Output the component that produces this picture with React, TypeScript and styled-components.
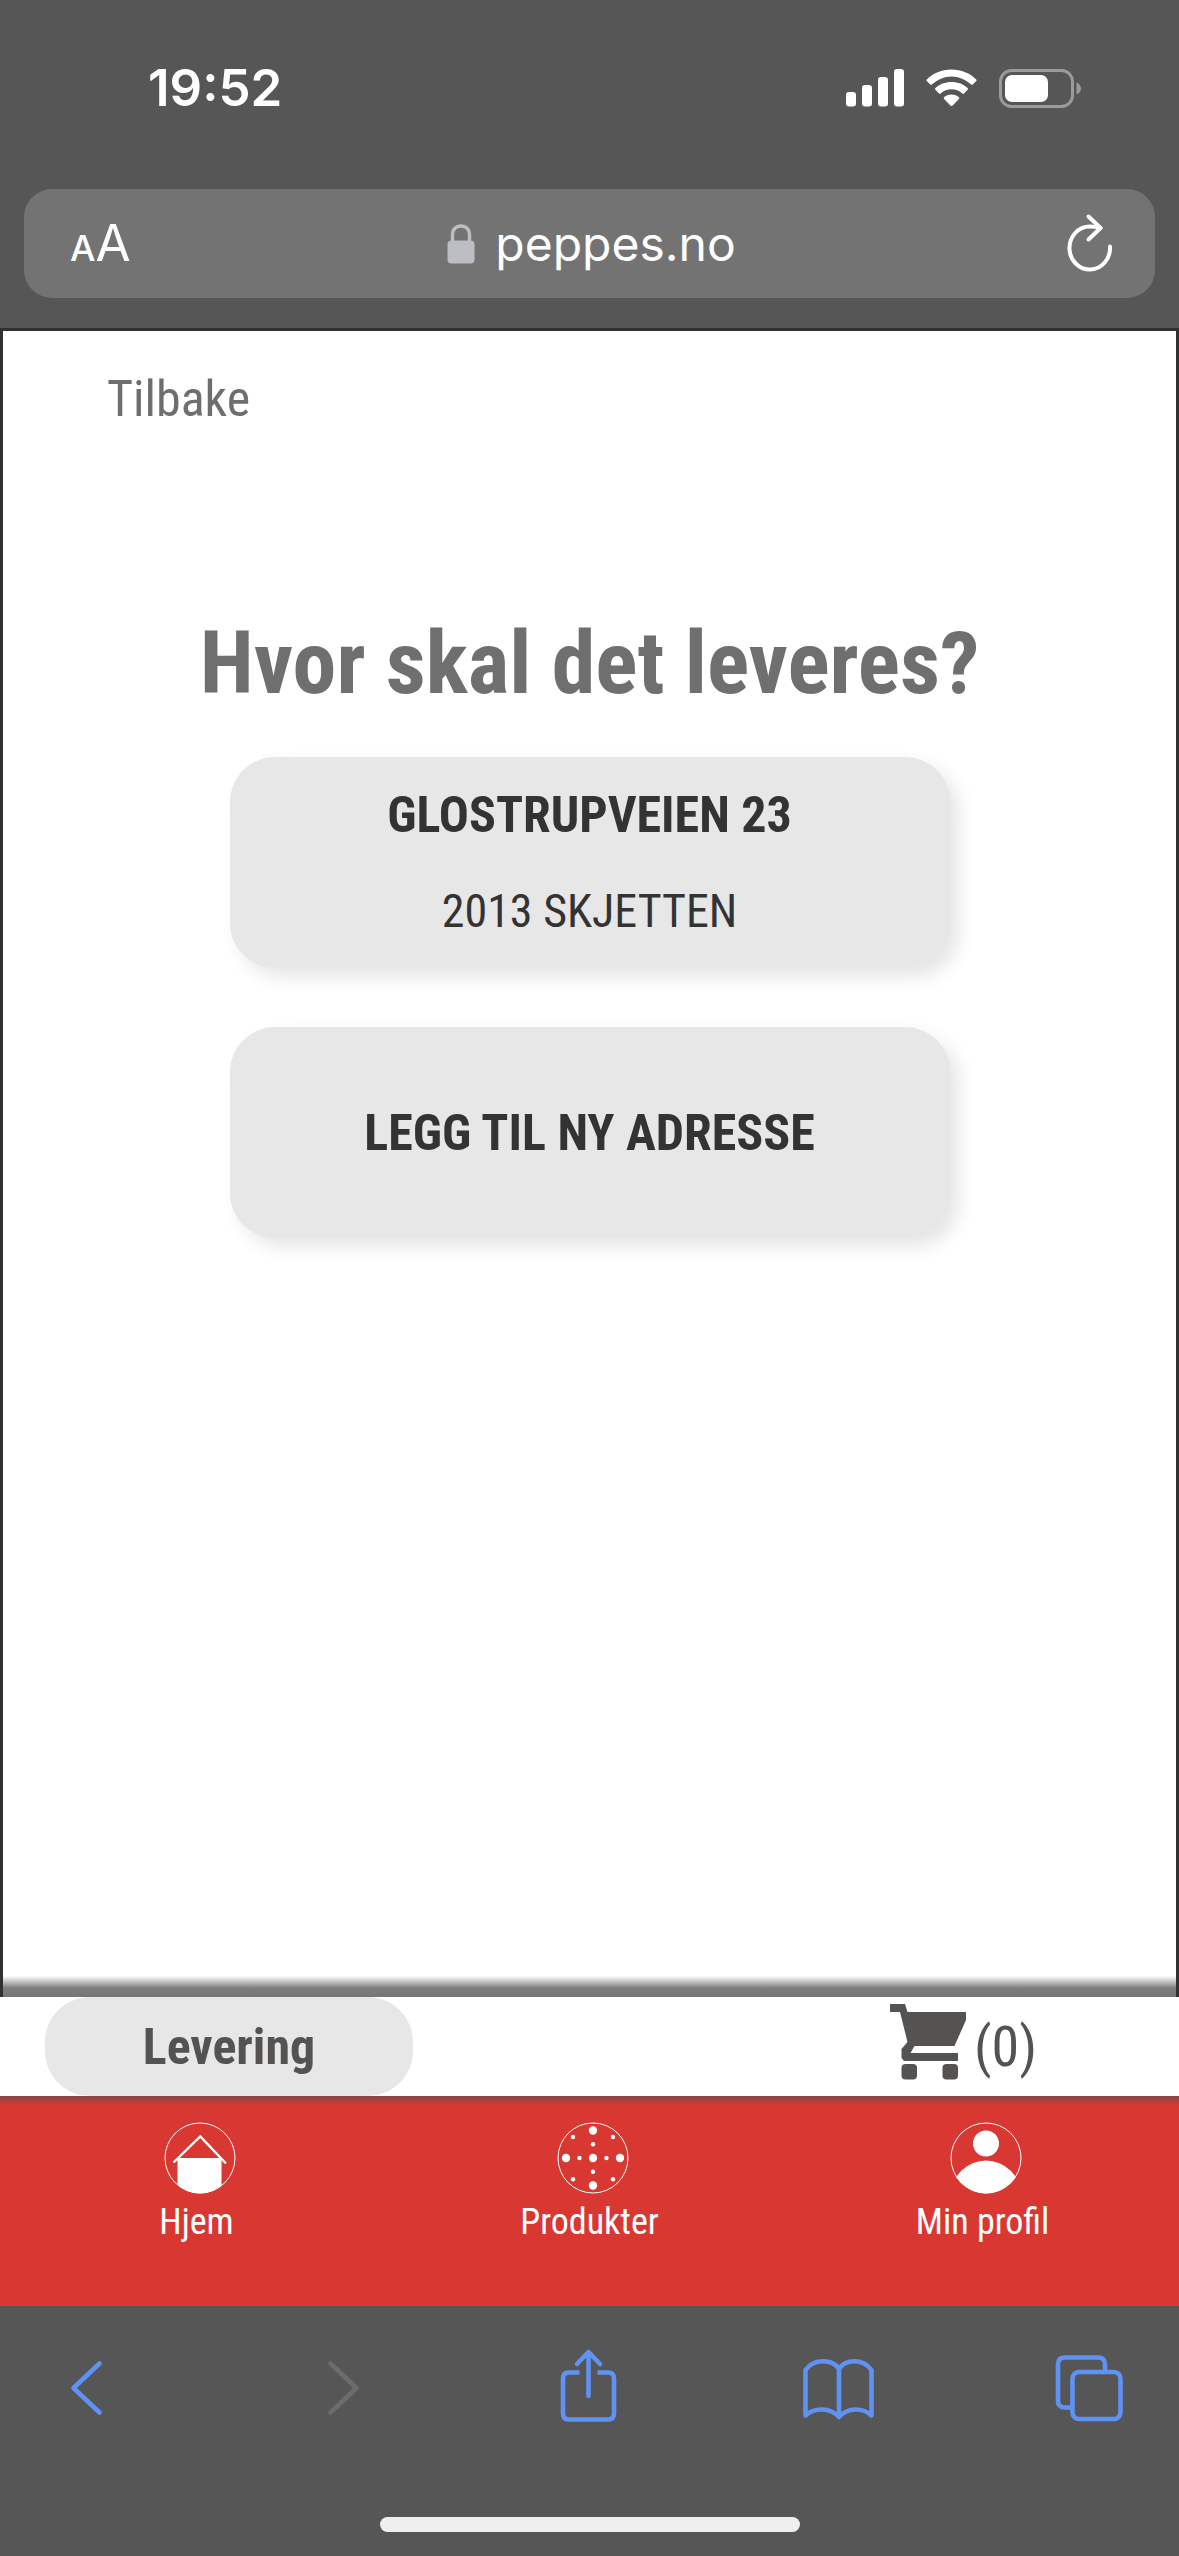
import React from "react";
import styled, { createGlobalStyle } from "styled-components";

const SYSTEM = 'Inter, "Liberation Sans", sans-serif';
const BRAND = '"Roboto Condensed", "Liberation Sans", sans-serif';
const CHROME = "#565656";
const BLUE = "#5e93f3";

const GlobalStyle = createGlobalStyle`
  *, *::before, *::after { box-sizing: border-box; }
  body { margin: 0; background: ${CHROME}; font-family: ${BRAND}; }
  button { border: 0; padding: 0; background: none; font: inherit; color: inherit; cursor: pointer; }
  a { color: inherit; text-decoration: none; }
  svg { display: block; flex: none; }
`;

const Screen = styled.div`
  min-height: 100vh;
  display: flex;
  flex-direction: column;
`;

const BrowserTop = styled.header`
  background: ${CHROME};
  color: #fff;
  font-family: ${SYSTEM};
  padding: 56px 24px 30px;
`;

const StatusBar = styled.div`
  display: flex;
  align-items: center;
  justify-content: space-between;
  height: 64px;
  padding: 0 74px 0 124px;
  margin-bottom: 69px;
`;

const Clock = styled.time`
  font-size: 51px;
  font-weight: 600;
  line-height: 64px;
`;

const StatusIcons = styled.div`
  display: flex;
  align-items: center;
  gap: 22px;
`;

const AddressBar = styled.div`
  display: grid;
  grid-template-columns: 1fr auto 1fr;
  align-items: center;
  height: 109px;
  padding: 0 42px 0 46px;
  border-radius: 28px;
  background: #737373;
`;

const TextSize = styled.button`
  justify-self: start;
  padding-top: 4px;
  font-size: 51px;
  line-height: 64px;

  small {
    font-size: 36px;
    font-weight: 500;
  }
`;

const Site = styled.button`
  display: flex;
  align-items: center;
  gap: 20px;
  font-size: 48px;
  line-height: 64px;
`;

const Reload = styled.button`
  justify-self: end;
`;

const Page = styled.main`
  flex: 1;
  border: solid #303132;
  border-width: 3px 3px 0;
  background: linear-gradient(to top, #767676 0, #7d7d7d 9px, #fff 21px);
`;

const BackLink = styled.a`
  display: inline-block;
  padding: 36px 104px 40px;
  font-size: 50px;
  line-height: 64px;
  color: #6e6e6e;
`;

const Title = styled.h1`
  margin: 140px 0 42px;
  font-size: 88px;
  font-weight: 700;
  line-height: 104px;
  text-align: center;
  color: #6f6f6f;
`;

const AddressList = styled.div`
  display: flex;
  flex-direction: column;
  align-items: center;
  gap: 59px;
`;

const AddressCard = styled.button`
  display: flex;
  flex-direction: column;
  align-items: center;
  justify-content: center;
  gap: 32px;
  width: 720px;
  max-width: 100%;
  min-height: 211px;
  border-radius: 45px;
  background: #e7e7e7;
  box-shadow: 9px 9px 18px rgba(0, 0, 0, 0.1);
  font-size: 46px;
  line-height: 64px;
  color: #333;

  strong {
    font-size: 50px;
  }
`;

const OrderBar = styled.section`
  display: flex;
  align-items: center;
  justify-content: space-between;
  padding: 0 142px 0 45px;
  background: #fff;
  color: #555351;
`;

const DeliveryButton = styled.button`
  width: 368px;
  height: 99px;
  border-radius: 45px;
  background: #e7e7e7;
  font-size: 50px;
  font-weight: 700;
`;

const CartLink = styled.a`
  display: flex;
  align-items: flex-start;
  gap: 8px;
  font-size: 56px;
  line-height: 86px;
`;

const SiteNav = styled.nav`
  display: grid;
  grid-template-columns: repeat(3, 1fr);
  height: 210px;
  padding-top: 26px;
  background: linear-gradient(#8b4644 0, #d93732 10px);
  color: #fff;
`;

const NavLink = styled.a`
  display: flex;
  flex-direction: column;
  align-items: center;
  gap: 4px;
  font-size: 36px;
  line-height: 48px;

  svg {
    margin-left: 6px;
  }
`;

const BrowserBottom = styled.footer`
  display: flex;
  flex-direction: column;
  align-items: center;
  justify-content: space-between;
  height: 250px;
  padding: 40px 0 24px;
  background: ${CHROME};
`;

const Toolbar = styled.div`
  display: flex;
  justify-content: space-between;
  width: 100%;
  padding: 0 54px 0 48px;
  color: ${BLUE};
`;

const ToolButton = styled.button`
  &:disabled {
    color: #6e6c6b;
  }
`;

const HomeIndicator = styled.div`
  width: 420px;
  height: 15px;
  border-radius: 8px;
  background: #efefef;
`;

const NavIcon = ({ children }: { children: React.ReactNode }) => (
  <svg width="72" height="72" viewBox="0 0 72 72" fill="#fff" aria-hidden="true">
    <circle cx="36" cy="36" r="35" fill="none" stroke="#fff" strokeWidth="1" />
    {children}
  </svg>
);

const ToolIcon = ({ children }: { children: React.ReactNode }) => (
  <svg
    width="72"
    height="82"
    viewBox="0 0 72 82"
    fill="none"
    stroke="currentColor"
    strokeWidth="4.6"
    strokeLinecap="round"
    strokeLinejoin="round"
    aria-hidden="true"
  >
    {children}
  </svg>
);

const pizzaDots: [number, number, number][] = [
  [36, 36, 4.2], [36, 8.5, 4.2], [36, 63.5, 4.2], [9, 36, 4.2], [63, 36, 4.2],
  [36, 22.3, 2.2], [36, 49.7, 2.2], [22.5, 36, 2.2], [49.5, 36, 2.2],
  [16, 15, 2.2], [56, 15, 2.2], [16, 57.3, 2.2], [56, 57.3, 2.2],
];

export default function App() {
  return (
    <Screen>
      <GlobalStyle />
      <BrowserTop>
        <StatusBar>
          <Clock>19:52</Clock>
          <StatusIcons>
            <svg width="58" height="38" viewBox="0 0 58 38" fill="#fff" aria-hidden="true">
              <rect x="0" y="23" width="10" height="14.5" rx="3" />
              <rect x="16" y="16" width="10" height="21.5" rx="3" />
              <rect x="32" y="8" width="10" height="29.5" rx="3" />
              <rect x="48" y="0" width="10" height="37.5" rx="3" />
            </svg>
            <svg width="51" height="38" viewBox="0 0 51 38" fill="#fff" aria-hidden="true">
              <path d="M25.5 0.5C35.3 0.5 44 4.200 50.200 10.500Q51 11.300 50.200 12.100L46.800 15.500Q46 16.200 45.200 15.500A28.500 28.500 0 0 0 5.800 15.500Q5 16.200 4.200 15.500L.8 12.100Q0 11.300.8 10.500C7 4.200 15.700.5 25.500.5Z" />
              <path d="M25.500 13C32 13 37.600 15.300 41.600 19.100Q42.400 20 41.600 20.800L38 24.400Q37.200 25.200 36.300 24.400A16.500 16.500 0 0 0 14.700 24.400Q13.800 25.200 13 24.400L9.400 20.800Q8.600 20 9.400 19.100C13.400 15.300 19 13 25.500 13Z" />
              <path d="M25.500 25.500C28.400 25.500 31 26.500 32.900 28.200Q33.700 29 32.900 29.900L26.400 36.700Q25.500 37.500 24.600 36.700L18.100 29.900Q17.300 29 18.100 28.200C20 26.500 22.600 25.500 25.500 25.500Z" />
            </svg>
            <svg width="82" height="39" viewBox="0 0 82 39" aria-hidden="true">
              <rect x="1.500" y="1.500" width="72" height="36" rx="11" fill="none" stroke="#9b9b9b" strokeWidth="3" />
              <rect x="6" y="6" width="43" height="27" rx="7" fill="#fff" />
              <path d="M77.500 13.500C80.400 14.700 82 17 82 19.500S80.400 24.300 77.500 25.500Z" fill="#9b9b9b" />
            </svg>
          </StatusIcons>
        </StatusBar>
        <AddressBar>
          <TextSize aria-label="AA"><small>A</small>A</TextSize>
          <Site>
            <svg width="28" height="40" viewBox="0 0 28 40" aria-hidden="true">
              <path d="M5.500 18V11C5.500 5 9 2 14 2S22.500 5 22.500 11V18" fill="none" stroke="#bdbdc4" strokeWidth="3.400" />
              <rect x="0.500" y="16.500" width="27" height="23" rx="4" fill="#bdbdc4" />
            </svg>
            peppes.no
          </Site>
          <Reload aria-label="Reload">
            <svg width="46" height="64" viewBox="0 0 46 64" fill="none" stroke="#fff" strokeWidth="4" strokeLinecap="round" strokeLinejoin="round" aria-hidden="true">
              <path d="M43 34.500A20.300 21.500 0 1 1 22.700 14.500Q28 14.500 33.500 16" />
              <path d="M21.500 4.500L33.500 16L21.500 27.500" />
            </svg>
          </Reload>
        </AddressBar>
      </BrowserTop>

      <Page>
        <BackLink href="#tilbake">Tilbake</BackLink>
        <Title>Hvor skal det leveres?</Title>
        <AddressList>
          <AddressCard>
            <strong>GLOSTRUPVEIEN 23</strong>
            <span>2013 SKJETTEN</span>
          </AddressCard>
          <AddressCard>
            <strong>LEGG TIL NY ADRESSE</strong>
          </AddressCard>
        </AddressList>
      </Page>

      <OrderBar>
        <DeliveryButton>Levering</DeliveryButton>
        <CartLink href="#handlekurv">
          <svg width="76" height="76" viewBox="0 0 76 76" fill="currentColor" aria-hidden="true">
            <path d="M0 0H15L17.500 8H76V16L64.500 42H24.500L20.500 49H68V57H14L11.500 54V45L17.500 38L10 8H0Z" />
            <rect x="11.500" y="60" width="15.500" height="15.500" rx="4" />
            <rect x="52.500" y="60" width="15.500" height="15.500" rx="4" />
          </svg>
          (0)
        </CartLink>
      </OrderBar>

      <SiteNav>
        <NavLink href="#hjem">
          <NavIcon>
            <clipPath id="home-disc"><circle cx="36" cy="36" r="35.500" /></clipPath>
            <rect x="13.500" y="36" width="44" height="36" clipPath="url(#home-disc)" />
            <path d="M9.500 40.500L36.300 14.500L62 41.500" fill="none" stroke="#fff" strokeWidth="2.400" />
          </NavIcon>
          Hjem
        </NavLink>
        <NavLink href="#produkter">
          <NavIcon>
            {pizzaDots.map(([x, y, r]) => (
              <circle key={`${x}-${y}`} cx={x} cy={y} r={r} />
            ))}
          </NavIcon>
          Produkter
        </NavLink>
        <NavLink href="#profil">
          <NavIcon>
            <clipPath id="profile-disc"><circle cx="36" cy="36" r="35.500" /></clipPath>
            <circle cx="36" cy="21.500" r="13" />
            <circle cx="36" cy="73.500" r="35" clipPath="url(#profile-disc)" />
          </NavIcon>
          Min profil
        </NavLink>
      </SiteNav>

      <BrowserBottom>
        <Toolbar>
          <ToolButton aria-label="Back">
            <ToolIcon><path d="M51.500 17.500L25.500 42L51.500 66.500" /></ToolIcon>
          </ToolButton>
          <ToolButton aria-label="Forward" disabled>
            <ToolIcon><path d="M31.500 17.500L57.500 42L31.500 66.500" /></ToolIcon>
          </ToolButton>
          <ToolButton aria-label="Share">
            <ToolIcon>
              <path d="M37.500 50V7M26 18L37.500 6L49 18" />
              <path strokeLinecap="butt" d="M28.500 26.500H18Q12 26.500 12 32.500V67.500Q12 73.500 18 73.500H57Q63 73.500 63 67.500V32.500Q63 26.500 57 26.500H46.500" />
            </ToolIcon>
          </ToolButton>
          <ToolButton aria-label="Bookmarks">
            <ToolIcon>
              <path d="M37 23C31 13 12 12 3.500 24V69.500C12 61.500 28 61 37 71C46 61 61 61.500 69.500 69.500V24C61 12 43 13 37 23V71" />
            </ToolIcon>
          </ToolButton>
          <ToolButton aria-label="Tabs">
            <ToolIcon>
              <path d="M19 61.500H12Q5 61.500 5 54.500V18.500Q5 11.500 12 11.500H45Q52 11.500 52 18.500V26" />
              <rect x="19.500" y="26" width="48" height="47" rx="6.500" />
            </ToolIcon>
          </ToolButton>
        </Toolbar>
        <HomeIndicator />
      </BrowserBottom>
    </Screen>
  );
}
